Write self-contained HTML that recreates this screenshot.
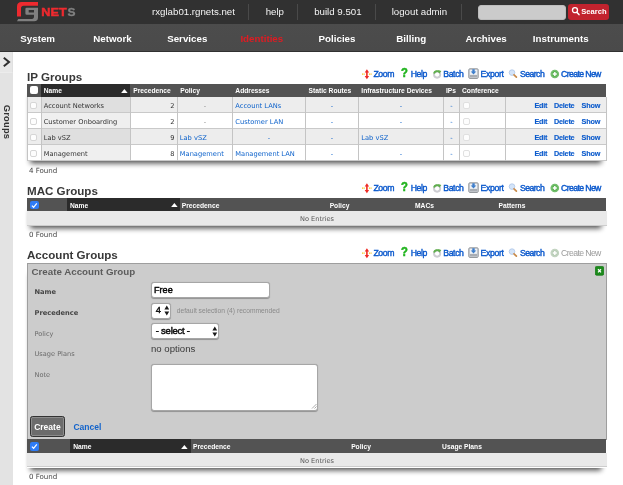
<!DOCTYPE html>
<html><head><meta charset="utf-8"><title>IP Groups</title>
<style>
*{box-sizing:border-box;margin:0;padding:0}
html,body{width:623px;height:485px;overflow:hidden;background:#fff}
body{position:relative;font-family:"Liberation Sans",sans-serif;color:#333}
.abs,.t{position:absolute;white-space:nowrap}
.t{line-height:1}
#top{position:absolute;left:0;top:0;width:623px;height:24px;background:#313131}
#nav{position:absolute;left:0;top:23.8px;width:623px;height:28.2px;background:linear-gradient(#4c4c4c,#4a4a4a);border-bottom:1.2px solid #303030}
.tl{position:absolute;top:5.9px;font-size:9.7px;color:#f4f4f4;white-space:nowrap;line-height:1.15}
.sep{position:absolute;top:4.2px;width:1px;height:15.4px;background:#4a4a4a}
.nv{position:absolute;top:33.3px;font-size:9.75px;font-weight:bold;color:#fff;white-space:nowrap;line-height:1.15}
#side{position:absolute;left:0;top:52px;width:13.3px;height:433px;background:#e3e3e3}
#sidebtn{position:absolute;left:0;top:52px;width:13.3px;height:20.6px;background:#e7e7e7;border-bottom:1px solid #ececec;border-right:1px solid #e0e0e0}
.h2{position:absolute;left:27px;font-size:11.6px;font-weight:bold;color:#383838;white-space:nowrap;line-height:1.15}
.act{position:absolute;font-size:8.7px;color:#0a58cc;white-space:nowrap;line-height:1.15;-webkit-text-stroke:0.4px #0a58cc}
.act.dis{color:#9a9a9a;-webkit-text-stroke:0}
.thead{position:absolute;left:27px;width:579.3px;height:13px;background:#535353}
.thead .dk{position:absolute;top:0;height:13px;background:#2b2b2b}
.th{position:absolute;font-size:6.7px;font-weight:bold;color:#fff;white-space:nowrap;line-height:1.15}
.row{position:absolute;left:27px;width:580px;height:15.9px;background:#fff;border-bottom:1px solid #c9c9c9}
.row.odd{background:#ededed}
.row .srt{position:absolute;left:14px;top:0;width:89px;height:14.9px;background:#efefef}
.row.odd .srt{background:#dfdfdf}
.vl{position:absolute;top:0;width:1px;height:16px;background:#c4c4c4}
.c{position:absolute;top:5.5px;font-family:"DejaVu Sans","Liberation Sans",sans-serif;font-size:6.68px;color:#333;white-space:nowrap;line-height:1.15}
.c.l{color:#0d62cb}
.c.ctr{transform:translateX(-50%)}
.c.r{transform:translateX(-100%)}
.c.b{font-family:"Liberation Sans",sans-serif;font-weight:bold;font-size:7.25px;top:4.6px;color:#0a5acc;letter-spacing:-0.2px;-webkit-text-stroke:.12px #0a5acc}
.cb{position:absolute;width:7px;height:7px;border:1px solid #d6d6d6;border-radius:2px;background:#fdfdfd}
.cbh{position:absolute;width:8.5px;height:8.5px;border-radius:2px;background:#fff}
.cbc{position:absolute;width:8.5px;height:8.5px;border-radius:2px;background:#2f7cf6}
.shadow{position:absolute;left:27px;width:580px;box-shadow:-1.5px 6.5px 5.5px -4px rgba(0,0,0,.72)}
.found{position:absolute;left:28.9px;font-family:"DejaVu Sans","Liberation Sans",sans-serif;font-size:7.1px;color:#444;white-space:nowrap;line-height:1.15}
.none{position:absolute;left:27px;width:580px;height:14.6px;background:#e9e9e9;text-align:center;font-family:"DejaVu Sans","Liberation Sans",sans-serif;font-size:6.6px;color:#555;line-height:16.2px;border-bottom:1px solid #cdcdcd;overflow:hidden}
#form{position:absolute;left:27px;top:263px;width:580px;height:177px;background:#cccccc;border:1px solid #9e9e9e}
.lab{position:absolute;left:34.5px;font-family:"DejaVu Sans","Liberation Sans",sans-serif;font-size:6.6px;color:#6a6a6a;white-space:nowrap;line-height:1.15}
.lab.b{font-weight:bold;color:#464646;font-size:6.7px}
.inp{position:absolute;background:#fff;border:1px solid #a6a6a6;border-radius:3px;box-shadow:0 .8px .8px rgba(0,0,0,.28)}
#wrap{position:absolute;left:0;top:0;width:623px;height:485px;will-change:transform;opacity:.999}
</style></head><body><div id="wrap">

<div id="top"></div>
<svg class="abs" style="left:0;top:0" width="90" height="24" viewBox="0 0 90 24">
<path d="M17 16.4 V6.6 Q17 2 21.6 2 H38 V5.8 H23.6 Q21 5.8 21 8.4 V16.4 Z" fill="#ee2a2f"/>
<path d="M25.4 9 Q25.4 7.7 26.7 7.7 H38 V17.4 Q38 21.2 34.2 21.2 H17 L18.2 18.9 H32.2 Q34 18.9 34 17.1 V14.8 H26.7 Q25.4 14.8 25.4 13.5 Z M28.7 9.9 H34 V12.6 H28.7 Z" fill="#808080" fill-rule="evenodd"/>
<text x="41.3" y="16.4" font-family="Liberation Sans, sans-serif" font-weight="bold" font-size="10.7" fill="#ee2a2f" textLength="25.4" lengthAdjust="spacingAndGlyphs" stroke="#ee2a2f" stroke-width=".45">NET</text>
<text x="67.4" y="16.4" font-family="Liberation Sans, sans-serif" font-weight="bold" font-size="10.7" fill="#808080" textLength="8" lengthAdjust="spacingAndGlyphs" stroke="#808080" stroke-width=".3">S</text>
</svg>
<div class="tl" style="left:152px">rxglab01.rgnets.net</div>
<div class="tl" style="left:265.7px">help</div>
<div class="tl" style="left:314.2px">build 9.501</div>
<div class="tl" style="left:391.7px">logout admin</div>
<div class="sep" style="left:248px"></div>
<div class="sep" style="left:297.2px"></div>
<div class="sep" style="left:375px"></div>
<div class="sep" style="left:461px"></div>
<div class="abs" style="left:478px;top:5px;width:88px;height:15px;background:#cbcbcb;border-radius:3px;border:1px solid #bdbdbd"></div>
<div class="abs" style="left:568.3px;top:4px;width:41.2px;height:16px;background:#c2232e;border-radius:3px"></div>
<svg class="abs" style="left:571px;top:6px" width="10" height="11" viewBox="0 0 10 11"><circle cx="4" cy="4.2" r="2.5" fill="none" stroke="#fff" stroke-width="1.3"/><path d="M5.8 6.2 L8 8.6" stroke="#fff" stroke-width="1.5" stroke-linecap="round"/></svg>
<div class="t" style="left:581.3px;top:7.6px;font-size:7.6px;font-weight:bold;color:#fff">Search</div>
<div id="nav"></div>
<div class="nv" style="left:20.3px;">System</div>
<div class="nv" style="left:93.2px;">Network</div>
<div class="nv" style="left:167.2px;">Services</div>
<div class="nv" style="left:240.4px;color:#e01b22">Identities</div>
<div class="nv" style="left:318.6px;">Policies</div>
<div class="nv" style="left:396.3px;">Billing</div>
<div class="nv" style="left:465.6px;">Archives</div>
<div class="nv" style="left:532.8px;">Instruments</div>
<div id="side"></div><div id="sidebtn"></div>
<svg class="abs" style="left:0;top:52px" width="14" height="20" viewBox="0 0 14 20"><path d="M3.8 5.8 L9 10 L3.8 14.2" fill="none" stroke="#2e2e2e" stroke-width="2"/></svg>
<div class="t" style="left:7.3px;top:122px;font-size:9.4px;font-weight:bold;color:#333;transform:translate(-50%,-50%) rotate(90deg);letter-spacing:.2px">Groups</div>
<div class="h2" style="top:69.8px">IP Groups</div>
<svg class="abs" style="left:361px;top:68.5px" width="12" height="11" viewBox="0 0 12 11">
<path d="M5.9 .2 L8.1 3.4 H6.7 V7 H8.1 L5.9 10.2 L3.7 7 H5.1 V3.4 H3.7 Z" fill="#ee2b24"/>
<path d="M1 5.1 H3.9 M7.9 5.1 H10.8" stroke="#f3c31a" stroke-width="1.2" stroke-dasharray="1.1 .5"/></svg>
<div class="act" style="left:373.4px;top:69.4px;letter-spacing:-0.4px">Zoom</div>
<div class="t" style="left:400.5px;top:67.4px;font-size:12.8px;font-weight:bold;color:#22b41f;-webkit-text-stroke:.55px #22b41f;transform-origin:0 0;transform:scaleX(.88)">?</div>
<div class="act" style="left:410.8px;top:69.4px;letter-spacing:-0.47px">Help</div>
<svg class="abs" style="left:432px;top:68.5px" width="11" height="11" viewBox="0 0 11 11">
<circle cx="5.1" cy="5.6" r="3.1" fill="none" stroke="#cdcdd2" stroke-width="1.9"/>
<path d="M2 4.6 A3.3 3.3 0 0 1 7.4 3" fill="none" stroke="#5fae4c" stroke-width="1.9"/><path d="M6.2 1 L9.4 2 L7.2 4.8 Z" fill="#5fae4c"/></svg>
<div class="act" style="left:443.3px;top:69.4px;letter-spacing:-0.4px">Batch</div>
<svg class="abs" style="left:468.1px;top:68.3px" width="11" height="11" viewBox="0 0 11 11">
<rect x=".9" y=".9" width="9.2" height="9.4" rx=".8" fill="#eef1f5" stroke="#7d8288" stroke-width="1"/><rect x="1.8" y="6.9" width="7.4" height="2.6" fill="#a9adb3"/>
<path d="M4.3 1.2 H6.7 V3.6 H8.3 L5.5 6.4 L2.7 3.6 H4.3 Z" fill="#3f7fcc"/></svg>
<div class="act" style="left:480.4px;top:69.4px;letter-spacing:-0.31px">Export</div>
<svg class="abs" style="left:508px;top:68.5px" width="11" height="11" viewBox="0 0 11 11">
<circle cx="4" cy="3.6" r="2.8" fill="#d4e4f8" stroke="#b4cbea" stroke-width=".9"/><path d="M6 5.8 L8.4 8.2" stroke="#c98b4a" stroke-width="1.7" stroke-linecap="round"/></svg>
<div class="act" style="left:520px;top:69.4px;letter-spacing:-0.56px">Search</div>
<svg class="abs" style="left:550px;top:68.5px" width="10" height="10" viewBox="0 0 10 10"><circle cx="4.8" cy="5" r="4.3" fill="#5db455"/><circle cx="4.8" cy="5" r="3.6" fill="none" stroke="rgba(255,255,255,.25)" stroke-width=".7"/><path d="M4.8 3 V7 M2.8 5 H6.8" stroke="#fff" stroke-width="1.4"/></svg>
<div class="act" style="left:561.1px;top:69.4px;letter-spacing:-0.62px">Create New</div>
<div class="shadow" style="top:84px;height:76.9px"></div>
<div class="thead" style="top:84px;height:13px"><div class="dk" style="left:14px;width:89px;height:13px"></div></div>
<div class="cbh" style="left:30px;top:86.3px;width:8.2px;height:8.1px"></div>
<div class="th" style="left:43.7px;top:87.2px">Name</div>
<div class="th" style="left:133.2px;top:87.2px">Precedence</div>
<div class="th" style="left:180.2px;top:87.2px">Policy</div>
<div class="th" style="left:235.3px;top:87.2px">Addresses</div>
<div class="th" style="left:308.5px;top:87.2px">Static Routes</div>
<div class="th" style="left:361.3px;top:87.2px">Infrastructure Devices</div>
<div class="th" style="left:446px;top:87.2px">IPs</div>
<div class="th" style="left:462px;top:87.2px">Conference</div>
<svg class="abs" style="left:121.3px;top:88.9px" width="7" height="4.2" viewBox="0 0 7 4.2"><path d="M0 4.2 L3.4 0 L6.8 4.2 Z" fill="#fff"/></svg>
<div class="row odd" style="top:97.3px"><div class="srt"></div>
<div class="vl" style="left:0px"></div>
<div class="vl" style="left:14px"></div>
<div class="vl" style="left:103px"></div>
<div class="vl" style="left:149.5px"></div>
<div class="vl" style="left:204.5px"></div>
<div class="vl" style="left:277.5px"></div>
<div class="vl" style="left:330.5px"></div>
<div class="vl" style="left:415.5px"></div>
<div class="vl" style="left:431.5px"></div>
<div class="vl" style="left:477.5px"></div>
<div class="vl" style="left:579px"></div>
<div class="cb" style="left:3px;top:5px"></div>
<div class="c" style="left:16.7px">Account Networks</div>
<div class="c r" style="left:147.5px">2</div>
<div class="c ctr" style="left:178px;color:#888">-</div>
<div class="c l" style="left:208.3px">Account LANs</div>
<div class="c l ctr" style="left:305px">-</div>
<div class="c l ctr" style="left:374px">-</div>
<div class="c l ctr" style="left:424.5px">-</div>
<div class="cb" style="left:436px;top:4.8px;border-color:#e0e0e0"></div>
<div class="c b" style="left:507.4px">Edit</div><div class="c b" style="left:526.9px">Delete</div><div class="c b" style="left:554.6px">Show</div>
</div>
<div class="row" style="top:113.2px"><div class="srt"></div>
<div class="vl" style="left:0px"></div>
<div class="vl" style="left:14px"></div>
<div class="vl" style="left:103px"></div>
<div class="vl" style="left:149.5px"></div>
<div class="vl" style="left:204.5px"></div>
<div class="vl" style="left:277.5px"></div>
<div class="vl" style="left:330.5px"></div>
<div class="vl" style="left:415.5px"></div>
<div class="vl" style="left:431.5px"></div>
<div class="vl" style="left:477.5px"></div>
<div class="vl" style="left:579px"></div>
<div class="cb" style="left:3px;top:5px"></div>
<div class="c" style="left:16.7px">Customer Onboarding</div>
<div class="c r" style="left:147.5px">2</div>
<div class="c ctr" style="left:178px;color:#888">-</div>
<div class="c l" style="left:208.3px">Customer LAN</div>
<div class="c l ctr" style="left:305px">-</div>
<div class="c l ctr" style="left:374px">-</div>
<div class="c l ctr" style="left:424.5px">-</div>
<div class="cb" style="left:436px;top:4.8px;border-color:#e0e0e0"></div>
<div class="c b" style="left:507.4px">Edit</div><div class="c b" style="left:526.9px">Delete</div><div class="c b" style="left:554.6px">Show</div>
</div>
<div class="row odd" style="top:129.1px"><div class="srt"></div>
<div class="vl" style="left:0px"></div>
<div class="vl" style="left:14px"></div>
<div class="vl" style="left:103px"></div>
<div class="vl" style="left:149.5px"></div>
<div class="vl" style="left:204.5px"></div>
<div class="vl" style="left:277.5px"></div>
<div class="vl" style="left:330.5px"></div>
<div class="vl" style="left:415.5px"></div>
<div class="vl" style="left:431.5px"></div>
<div class="vl" style="left:477.5px"></div>
<div class="vl" style="left:579px"></div>
<div class="cb" style="left:3px;top:5px"></div>
<div class="c" style="left:16.7px">Lab vSZ</div>
<div class="c r" style="left:147.5px">9</div>
<div class="c l" style="left:152.8px">Lab vSZ</div>
<div class="c l ctr" style="left:242px">-</div>
<div class="c l ctr" style="left:305px">-</div>
<div class="c l" style="left:334.3px">Lab vSZ</div>
<div class="c l ctr" style="left:424.5px">-</div>
<div class="cb" style="left:436px;top:4.8px;border-color:#e0e0e0"></div>
<div class="c b" style="left:507.4px">Edit</div><div class="c b" style="left:526.9px">Delete</div><div class="c b" style="left:554.6px">Show</div>
</div>
<div class="row" style="top:145.0px"><div class="srt"></div>
<div class="vl" style="left:0px"></div>
<div class="vl" style="left:14px"></div>
<div class="vl" style="left:103px"></div>
<div class="vl" style="left:149.5px"></div>
<div class="vl" style="left:204.5px"></div>
<div class="vl" style="left:277.5px"></div>
<div class="vl" style="left:330.5px"></div>
<div class="vl" style="left:415.5px"></div>
<div class="vl" style="left:431.5px"></div>
<div class="vl" style="left:477.5px"></div>
<div class="vl" style="left:579px"></div>
<div class="cb" style="left:3px;top:5px"></div>
<div class="c" style="left:16.7px">Management</div>
<div class="c r" style="left:147.5px">8</div>
<div class="c l" style="left:152.8px">Management</div>
<div class="c l" style="left:208.3px">Management LAN</div>
<div class="c l ctr" style="left:305px">-</div>
<div class="c l ctr" style="left:374px">-</div>
<div class="c l ctr" style="left:424.5px">-</div>
<div class="cb" style="left:436px;top:4.8px;border-color:#e0e0e0"></div>
<div class="c b" style="left:507.4px">Edit</div><div class="c b" style="left:526.9px">Delete</div><div class="c b" style="left:554.6px">Show</div>
</div>
<div class="found" style="top:166.8px">4 Found</div>
<div class="h2" style="top:183.6px">MAC Groups</div>
<svg class="abs" style="left:361px;top:182.5px" width="12" height="11" viewBox="0 0 12 11">
<path d="M5.9 .2 L8.1 3.4 H6.7 V7 H8.1 L5.9 10.2 L3.7 7 H5.1 V3.4 H3.7 Z" fill="#ee2b24"/>
<path d="M1 5.1 H3.9 M7.9 5.1 H10.8" stroke="#f3c31a" stroke-width="1.2" stroke-dasharray="1.1 .5"/></svg>
<div class="act" style="left:373.4px;top:183.4px;letter-spacing:-0.4px">Zoom</div>
<div class="t" style="left:400.5px;top:181.4px;font-size:12.8px;font-weight:bold;color:#22b41f;-webkit-text-stroke:.55px #22b41f;transform-origin:0 0;transform:scaleX(.88)">?</div>
<div class="act" style="left:410.8px;top:183.4px;letter-spacing:-0.47px">Help</div>
<svg class="abs" style="left:432px;top:182.5px" width="11" height="11" viewBox="0 0 11 11">
<circle cx="5.1" cy="5.6" r="3.1" fill="none" stroke="#cdcdd2" stroke-width="1.9"/>
<path d="M2 4.6 A3.3 3.3 0 0 1 7.4 3" fill="none" stroke="#5fae4c" stroke-width="1.9"/><path d="M6.2 1 L9.4 2 L7.2 4.8 Z" fill="#5fae4c"/></svg>
<div class="act" style="left:443.3px;top:183.4px;letter-spacing:-0.4px">Batch</div>
<svg class="abs" style="left:468.1px;top:182.3px" width="11" height="11" viewBox="0 0 11 11">
<rect x=".9" y=".9" width="9.2" height="9.4" rx=".8" fill="#eef1f5" stroke="#7d8288" stroke-width="1"/><rect x="1.8" y="6.9" width="7.4" height="2.6" fill="#a9adb3"/>
<path d="M4.3 1.2 H6.7 V3.6 H8.3 L5.5 6.4 L2.7 3.6 H4.3 Z" fill="#3f7fcc"/></svg>
<div class="act" style="left:480.4px;top:183.4px;letter-spacing:-0.31px">Export</div>
<svg class="abs" style="left:508px;top:182.5px" width="11" height="11" viewBox="0 0 11 11">
<circle cx="4" cy="3.6" r="2.8" fill="#d4e4f8" stroke="#b4cbea" stroke-width=".9"/><path d="M6 5.8 L8.4 8.2" stroke="#c98b4a" stroke-width="1.7" stroke-linecap="round"/></svg>
<div class="act" style="left:520px;top:183.4px;letter-spacing:-0.56px">Search</div>
<svg class="abs" style="left:550px;top:182.5px" width="10" height="10" viewBox="0 0 10 10"><circle cx="4.8" cy="5" r="4.3" fill="#5db455"/><circle cx="4.8" cy="5" r="3.6" fill="none" stroke="rgba(255,255,255,.25)" stroke-width=".7"/><path d="M4.8 3 V7 M2.8 5 H6.8" stroke="#fff" stroke-width="1.4"/></svg>
<div class="act" style="left:561.1px;top:183.4px;letter-spacing:-0.62px">Create New</div>
<div class="shadow" style="top:198.5px;height:27.7px"></div>
<div class="thead" style="top:198.2px;height:13.3px"><div class="dk" style="left:39.7px;width:113px;height:13.3px"></div></div>
<div class="cbc" style="left:30px;top:200.7px"></div><svg class="abs" style="left:30px;top:200.7px" width="8.5" height="8.5" viewBox="0 0 8 8"><path d="M1.8 4.3 L3.4 5.9 L6.4 2.2" fill="none" stroke="#fff" stroke-width="1.15"/></svg>
<div class="th" style="left:70px;top:201.9px">Name</div>
<svg class="abs" style="left:171px;top:203.1px" width="7" height="4.2" viewBox="0 0 7 4.2"><path d="M0 4.2 L3.4 0 L6.8 4.2 Z" fill="#fff"/></svg>
<div class="th" style="left:181.8px;top:201.9px">Precedence</div>
<div class="th" style="left:339.5px;top:201.9px;transform:translateX(-50%)">Policy</div>
<div class="th" style="left:424.5px;top:201.9px;transform:translateX(-50%)">MACs</div>
<div class="th" style="left:512px;top:201.9px;transform:translateX(-50%)">Patterns</div>
<div class="none" style="top:211.4px;height:14.8px;line-height:16.4px">No Entries</div>
<div class="found" style="top:230.8px">0 Found</div>
<div class="h2" style="top:248.1px">Account Groups</div>
<svg class="abs" style="left:361px;top:247.5px" width="12" height="11" viewBox="0 0 12 11">
<path d="M5.9 .2 L8.1 3.4 H6.7 V7 H8.1 L5.9 10.2 L3.7 7 H5.1 V3.4 H3.7 Z" fill="#ee2b24"/>
<path d="M1 5.1 H3.9 M7.9 5.1 H10.8" stroke="#f3c31a" stroke-width="1.2" stroke-dasharray="1.1 .5"/></svg>
<div class="act" style="left:373.4px;top:248.4px;letter-spacing:-0.4px">Zoom</div>
<div class="t" style="left:400.5px;top:246.4px;font-size:12.8px;font-weight:bold;color:#22b41f;-webkit-text-stroke:.55px #22b41f;transform-origin:0 0;transform:scaleX(.88)">?</div>
<div class="act" style="left:410.8px;top:248.4px;letter-spacing:-0.47px">Help</div>
<svg class="abs" style="left:432px;top:247.5px" width="11" height="11" viewBox="0 0 11 11">
<circle cx="5.1" cy="5.6" r="3.1" fill="none" stroke="#cdcdd2" stroke-width="1.9"/>
<path d="M2 4.6 A3.3 3.3 0 0 1 7.4 3" fill="none" stroke="#5fae4c" stroke-width="1.9"/><path d="M6.2 1 L9.4 2 L7.2 4.8 Z" fill="#5fae4c"/></svg>
<div class="act" style="left:443.3px;top:248.4px;letter-spacing:-0.4px">Batch</div>
<svg class="abs" style="left:468.1px;top:247.3px" width="11" height="11" viewBox="0 0 11 11">
<rect x=".9" y=".9" width="9.2" height="9.4" rx=".8" fill="#eef1f5" stroke="#7d8288" stroke-width="1"/><rect x="1.8" y="6.9" width="7.4" height="2.6" fill="#a9adb3"/>
<path d="M4.3 1.2 H6.7 V3.6 H8.3 L5.5 6.4 L2.7 3.6 H4.3 Z" fill="#3f7fcc"/></svg>
<div class="act" style="left:480.4px;top:248.4px;letter-spacing:-0.31px">Export</div>
<svg class="abs" style="left:508px;top:247.5px" width="11" height="11" viewBox="0 0 11 11">
<circle cx="4" cy="3.6" r="2.8" fill="#d4e4f8" stroke="#b4cbea" stroke-width=".9"/><path d="M6 5.8 L8.4 8.2" stroke="#c98b4a" stroke-width="1.7" stroke-linecap="round"/></svg>
<div class="act" style="left:520px;top:248.4px;letter-spacing:-0.56px">Search</div>
<svg class="abs" style="left:550px;top:247.5px" width="10" height="10" viewBox="0 0 10 10"><circle cx="4.8" cy="5" r="4.3" fill="#b9cdb7"/><circle cx="4.8" cy="5" r="3.6" fill="none" stroke="rgba(255,255,255,.25)" stroke-width=".7"/><path d="M4.8 3 V7 M2.8 5 H6.8" stroke="#fff" stroke-width="1.4"/></svg>
<div class="act dis" style="left:561.1px;top:248.4px;letter-spacing:-0.62px">Create New</div>
<div class="shadow" style="top:263px;height:204.5px"></div>
<div id="form"></div>
<div class="t" style="left:31.5px;top:267.4px;font-size:9.75px;font-weight:bold;color:#5c5c5c">Create Account Group</div>
<svg class="abs" style="left:595px;top:266.3px" width="9" height="9.6" viewBox="0 0 9 9.6"><rect x=".4" y=".4" width="8.2" height="8.8" rx="1.2" fill="#1c8a1c" stroke="#137a13" stroke-width=".8"/><path d="M3 3.2 L6 6.4 M6 3.2 L3 6.4" stroke="#fff" stroke-width="1.25"/></svg>
<div class="lab b" style="top:288.5px">Name</div>
<div class="lab b" style="top:309.8px">Precedence</div>
<div class="lab" style="top:330.5px">Policy</div>
<div class="lab" style="top:350.9px">Usage Plans</div>
<div class="lab" style="top:371.9px">Note</div>
<div class="inp" style="left:150.6px;top:281.5px;width:119.4px;height:16.4px"></div>
<div class="t" style="left:154px;top:285.7px;font-size:9.1px;color:#000;-webkit-text-stroke:.4px #000">Free</div>
<div class="inp" style="left:150.7px;top:302.5px;width:20.4px;height:16.2px"></div>
<div class="t" style="left:155.8px;top:305.4px;font-size:9.4px;color:#111;-webkit-text-stroke:.45px #111">4</div>
<svg class="abs" style="left:163.5px;top:305px" width="6" height="11" viewBox="0 0 6 11"><path d="M.4 4.6 L2.8 .6 L5.2 4.6 Z M.4 6.4 L2.8 10.4 L5.2 6.4 Z" fill="#1a1a1a"/></svg>
<div class="t" style="left:176.7px;top:308px;font-size:6.7px;color:#8a8a8a">default selection (4) recommended</div>
<div class="inp" style="left:150.7px;top:323.2px;width:68.6px;height:16.2px"></div>
<div class="t" style="left:155.8px;top:326.1px;font-size:9.5px;color:#111;letter-spacing:-.25px;-webkit-text-stroke:.5px #111">- select -</div>
<svg class="abs" style="left:212.2px;top:326px" width="6" height="11" viewBox="0 0 6 11"><path d="M.4 4.6 L2.8 .6 L5.2 4.6 Z M.4 6.4 L2.8 10.4 L5.2 6.4 Z" fill="#1a1a1a"/></svg>
<div class="t" style="left:151px;top:343.8px;font-size:9.6px;color:#3a3a3a">no options</div>
<div class="inp" style="left:150.8px;top:364px;width:167.5px;height:46.5px;border-radius:3px"></div>
<svg class="abs" style="left:311px;top:403px" width="6" height="6" viewBox="0 0 6 6"><path d="M5.5 1 L1 5.5 M5.5 3.5 L3.5 5.5" stroke="#888" stroke-width=".7"/></svg>
<div class="abs" style="left:29.5px;top:416.2px;width:35.8px;height:20.6px;background:#6c6c6c;border:1px solid #333;border-radius:2.5px;box-shadow:inset 0 0 0 1px #8c8c8c"></div>
<div class="t" style="left:47.4px;top:422.8px;font-size:8.5px;font-weight:bold;color:#fff;transform:translateX(-50%)">Create</div>
<div class="t" style="left:73.4px;top:422.8px;font-size:8.5px;font-weight:bold;color:#1263cb">Cancel</div>
<div class="thead" style="top:439.3px;height:13.6px"><div class="dk" style="left:43px;width:120.6px;height:13.6px"></div></div>
<div class="cbc" style="left:30px;top:442.2px"></div><svg class="abs" style="left:30px;top:442.2px" width="8.5" height="8.5" viewBox="0 0 8 8"><path d="M1.8 4.3 L3.4 5.9 L6.4 2.2" fill="none" stroke="#fff" stroke-width="1.15"/></svg>
<div class="th" style="left:73.2px;top:443.3px">Name</div>
<svg class="abs" style="left:181.4px;top:444.6px" width="7" height="4.2" viewBox="0 0 7 4.2"><path d="M0 4.2 L3.4 0 L6.8 4.2 Z" fill="#fff"/></svg>
<div class="th" style="left:193px;top:443.3px">Precedence</div>
<div class="th" style="left:361px;top:443.3px;transform:translateX(-50%)">Policy</div>
<div class="th" style="left:462px;top:443.3px;transform:translateX(-50%)">Usage Plans</div>
<div class="none" style="top:452.9px;height:14.5px">No Entries</div>
<div class="found" style="top:472.6px">0 Found</div>
</div></body></html>
